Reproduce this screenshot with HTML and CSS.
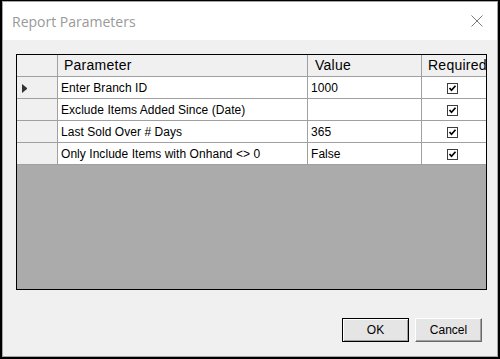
FILE: index.html
```html
<html>

<head>
    <meta charset="utf-8" />
    <link rel="stylesheet" href="styles.css">
</head>

<body>
    <div class="dialog">
        <div class="titlebar">
            <span class="title">Report Parameters</span>
            <svg class="close" width="12" height="12" viewBox="0 0 12 12">
                <path d="M0.5 0.5 L11.5 11.5 M11.5 0.5 L0.5 11.5" stroke="#7a7a7a" stroke-width="1" fill="none" />
            </svg>
        </div>
        <div class="content">
            <div class="grid">
                <div class="row head">
                    <div class="cell rh"></div>
                    <div class="cell param">Parameter</div>
                    <div class="cell value">Value</div>
                    <div class="cell req">Required</div>
                </div>
                <div class="row">
                    <div class="cell rh"><span class="arrow"></span></div>
                    <div class="cell param">Enter Branch ID</div>
                    <div class="cell value">1000</div>
                    <div class="cell req"><span class="check"></span></div>
                </div>
                <div class="row">
                    <div class="cell rh"></div>
                    <div class="cell param">Exclude Items Added Since (Date)</div>
                    <div class="cell value"></div>
                    <div class="cell req"><span class="check"></span></div>
                </div>
                <div class="row">
                    <div class="cell rh"></div>
                    <div class="cell param">Last Sold Over # Days</div>
                    <div class="cell value">365</div>
                    <div class="cell req"><span class="check"></span></div>
                </div>
                <div class="row">
                    <div class="cell rh"></div>
                    <div class="cell param">Only Include Items with Onhand &lt;&gt; 0</div>
                    <div class="cell value">False</div>
                    <div class="cell req"><span class="check"></span></div>
                </div>
            </div>
            <div class="buttons">
                <button class="btn default">OK</button>
                <button class="btn">Cancel</button>
            </div>
        </div>
    </div>
    <script>
        // same checkmark in every "Required" cell
        const checkSvg = '<svg width="11" height="11" viewBox="0 0 11 11">' +
            '<rect x="0.5" y="0.5" width="10" height="10" fill="#fff" stroke="#3c3c3c" />' +
            '<path d="M2.5 5 L4.5 7.2 L8.5 2.8" fill="none" stroke="#000" stroke-width="1.7" />' +
            '</svg>';
        document.querySelectorAll('.check').forEach(el => el.innerHTML = checkSvg);
    </script>
</body>

</html>
```

FILE: styles.css
```css
body {
    margin: 0;
    background: #000;
    width: 500px;
    height: 359px;
    overflow: hidden;
}

.dialog {
    box-sizing: border-box;
    width: 496px;
    height: 356px;
    margin: 1px 2px 2px 2px;
    border: 1px solid #a6a6a6;
    background: #f0f0f0;
    display: flex;
    flex-direction: column;
}

.titlebar {
    height: 38px;
    background: #fff;
    display: flex;
    align-items: center;
    justify-content: space-between;
    padding: 0 14px 0 9px;
}

.title {
    font-family: "Open Sans", sans-serif;
    font-size: 14px;
    color: #999;
    margin-top: 1px;
}

.close {
    display: block;
}

.content {
    flex: 1;
    padding: 14px 0 0 13px;
}

.grid {
    box-sizing: border-box;
    width: 471px;
    height: 236px;
    border: 1px solid #000;
    background: #ababab;
    overflow: hidden;
}

.row {
    display: flex;
    box-sizing: border-box;
    height: 22px;
    background: #fff;
    border-bottom: 1px solid #a0a0a0;
}

.cell {
    box-sizing: border-box;
    flex: none;
    height: 21px;
    border-right: 1px solid #a0a0a0;
    font-family: "Liberation Sans", Arial, sans-serif;
    font-size: 12px;
    letter-spacing: 0.05px;
    line-height: 21px;
    padding: 1px 0 0 3px;
    white-space: nowrap;
    overflow: hidden;
    color: #000;
}

.cell.rh {
    width: 41px;
    background: #f0f0f0;
    display: flex;
    align-items: center;
    padding: 0 0 0 5px;
}

.cell.param {
    width: 250px;
}

.cell.value {
    width: 114px;
}

.cell.req {
    width: 64px;
    border-right: none;
    padding: 0 0 0 25px;
    display: flex;
    align-items: center;
}

.row.head {
    background: #f0f0f0;
}

.row.head .cell {
    font-size: 14px;
    letter-spacing: 0.25px;
    padding-left: 6px;
    padding-top: 0;
}

.row.head .cell.value {
    padding-left: 7px;
}

.row.head .cell.req {
    display: block;
}

.arrow {
    display: block;
    width: 0;
    height: 1px;
    border-left: 5px solid #333;
    border-top: 4px solid transparent;
    border-bottom: 4px solid transparent;
    margin-top: 1px;
}

.check {
    display: block;
    width: 11px;
    height: 11px;
    margin-top: 1px;
}

.check svg {
    display: block;
}

.buttons {
    display: flex;
    justify-content: flex-end;
    gap: 6px;
    margin-top: 28px;
    padding-right: 15px;
}

.btn {
    box-sizing: border-box;
    width: 67px;
    height: 24px;
    margin: 0;
    padding: 0;
    background: #e5e5e5;
    border: 1px solid;
    border-color: #fff #696969 #696969 #fff;
    box-shadow: inset -1px -1px 0 #a0a0a0;
    font-family: "Liberation Sans", Arial, sans-serif;
    font-size: 12px;
    color: #000;
}

.btn.default {
    border-color: #000;
    box-shadow: inset 1px 1px 0 #fff, inset -1px -1px 0 #a0a0a0;
}
```
